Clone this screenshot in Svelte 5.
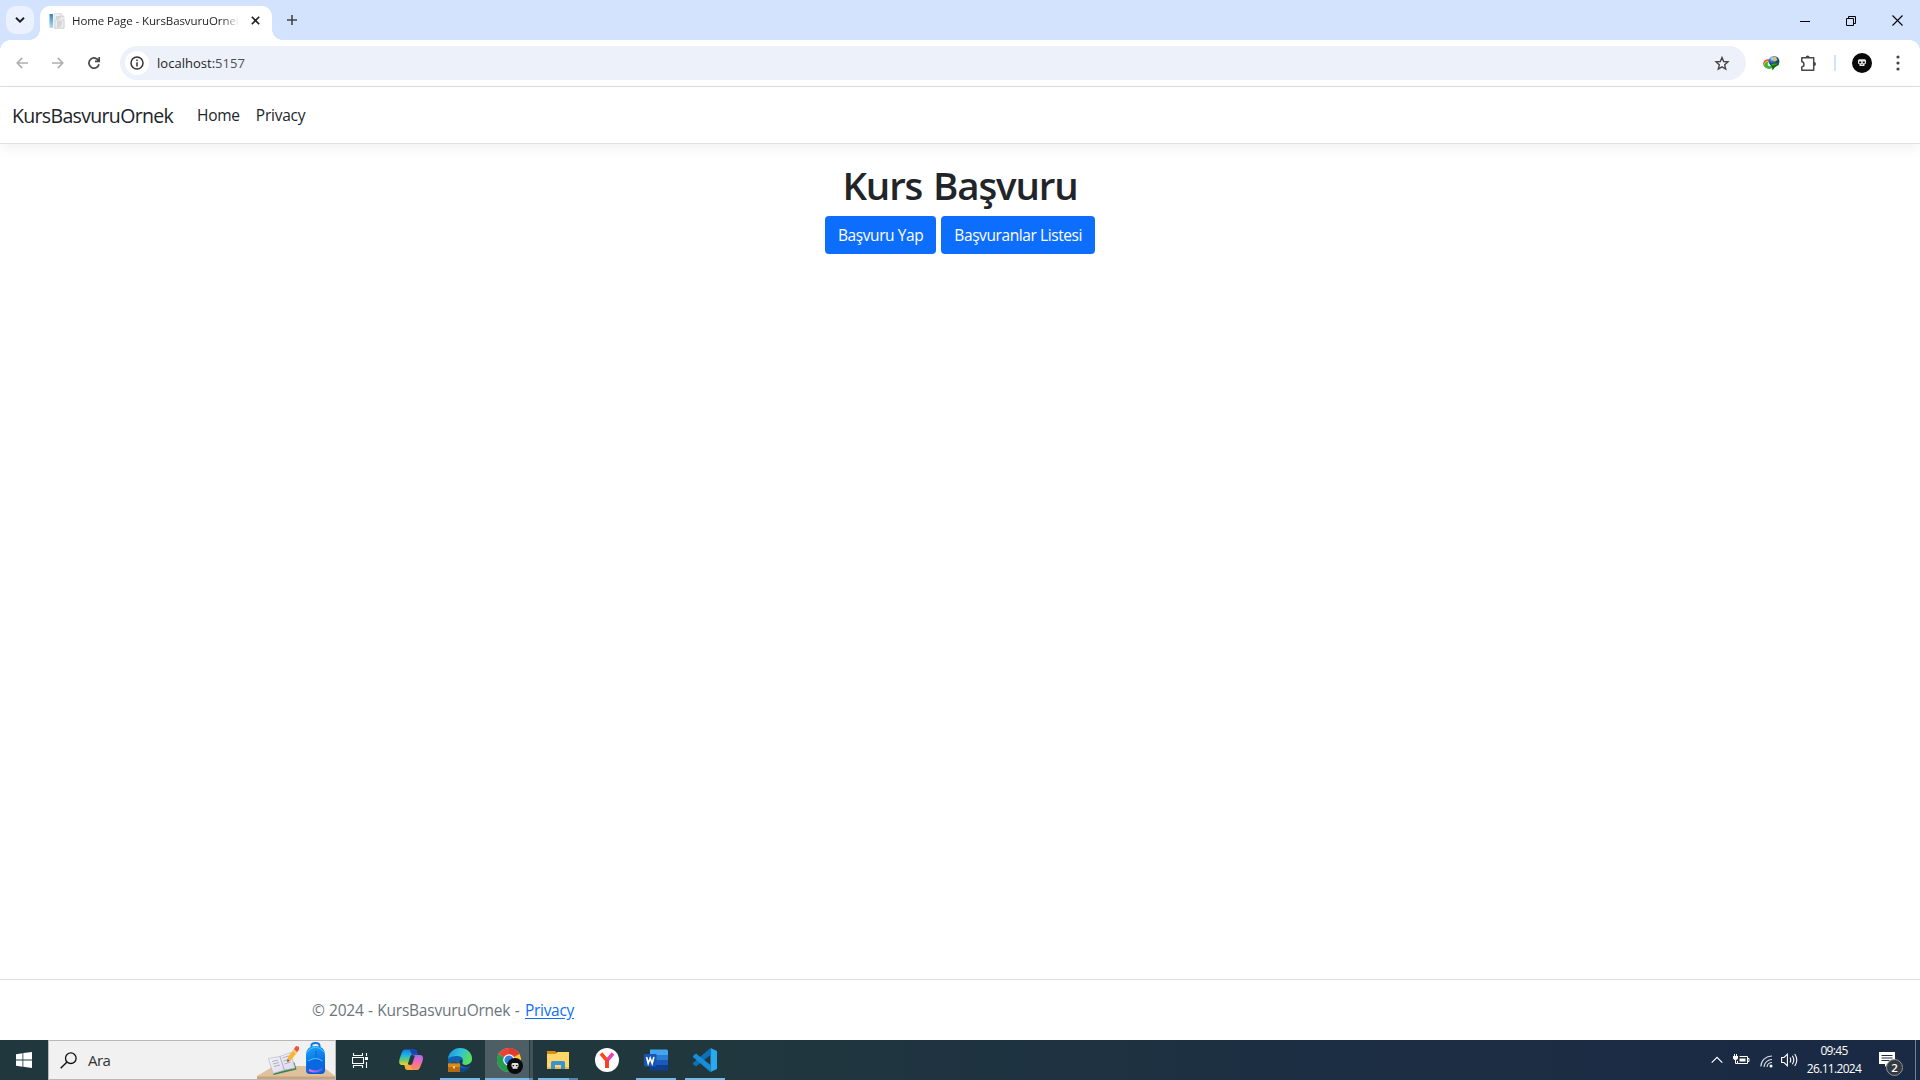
<script>
  const title = 'Home Page - KursBasvuruOrnek';
  const links = ['Home', 'Privacy'];
  const actions = ['Başvuru Yap', 'Başvuranlar Listesi'];
</script>

<div class="screen">
  <header class="tabstrip">
    <button class="tabsearch" aria-label="Search tabs">
      <svg width="10" height="6" viewBox="0 0 10 6"><path d="M1 .8 5 4.7 9 .8" fill="none" stroke="#1f1f1f" stroke-width="1.9" /></svg>
    </button>
    <div class="tab">
      <svg class="favicon" width="16" height="16" viewBox="0 0 16 16">
        <defs><linearGradient id="fv" x2="0" y2="1"><stop stop-color="#2f86c4" /><stop offset="1" stop-color="#b9dcf0" /></linearGradient></defs>
        <path d="M.5 1h3.500v14H.5z" fill="url(#fv)" /><path d="M5 .5h7l3 3v12H5z" fill="#eee" stroke="#d5d5d5" stroke-width=".6" />
        <path d="M7 4h5M7 6h3M8 9h5M8 11h5M8 13h4" stroke="#bdbdbd" /><path d="M12 .5v3h3M6 7h9v8H6z" fill="none" stroke="#d8d8d8" />
      </svg>
      <span class="tabtitle">{title}</span>
      <svg class="close" width="9" height="9" viewBox="0 0 9 9"><path d="m.8.8 7.400 7.400M8.200.8.8 8.200" stroke="#1f1f1f" stroke-width="1.600" /></svg>
    </div>
    <svg class="newtab" width="12" height="12" viewBox="0 0 12 12"><path d="M6 1v10M1 6h10" stroke="#444" stroke-width="1.600" /></svg>
    <div class="wincontrols">
      <svg width="10" height="10" viewBox="0 0 10 10"><path d="M0 5.500h10" stroke="#000" /></svg>
      <svg width="10" height="10" viewBox="0 0 10 10"><path d="M.5 2.500h7v7h-7zM2.500 2.500v-2h7v7h-2" fill="none" stroke="#000" /></svg>
      <svg width="11" height="11" viewBox="0 0 11 11"><path d="m.5.5 10 10M10.500.5l-10 10" stroke="#000" stroke-width="1.100" /></svg>
    </div>
  </header>

  <div class="toolbar">
    <svg class="nav-ic" width="12" height="12" viewBox="0 0 12 12"><path d="M12 6H1.500M6.300.9 1.200 6l5.100 5.100" fill="none" stroke="#adadad" stroke-width="1.500" /></svg>
    <svg class="nav-ic" width="12" height="12" viewBox="0 0 12 12"><path d="M0 6h10.500M5.700.9 10.800 6l-5.100 5.100" fill="none" stroke="#adadad" stroke-width="1.500" /></svg>
    <svg class="nav-ic" width="12" height="12" viewBox="0 0 12 12"><path d="M11 7.200A5.100 5.100 0 1 1 10.600 3.800M11.200 0v4.300H7" fill="none" stroke="#474747" stroke-width="1.700" /></svg>
    <div class="omnibox">
      <span class="site">
        <svg width="14" height="14" viewBox="0 0 14 14"><circle cx="7" cy="7" r="6" fill="none" stroke="#333" stroke-width="1.500" /><path d="M7 6.200V10.500M7 3.500V5" stroke="#333" stroke-width="1.500" /></svg>
      </span>
      <span class="url">localhost:<i>5157</i></span>
      <svg class="star" width="16" height="15" viewBox="0 0 16 15"><path d="m8 1.500 1.700 4 4.300.4-3.300 2.900 1 4.300L8 10.800l-3.700 2.300 1-4.300L2 5.900l4.300-.4z" fill="none" stroke="#474747" stroke-width="1.400" /></svg>
    </div>
    <svg class="idm" width="17" height="16" viewBox="0 0 17 16">
      <defs><radialGradient id="gl" cx=".35" cy=".25"><stop stop-color="#d9eaff" /><stop offset=".45" stop-color="#4d84d8" /><stop offset="1" stop-color="#193d83" /></radialGradient></defs>
      <ellipse cx="5.500" cy="8.800" rx="5.300" ry="4.500" fill="#e33a22" /><ellipse cx="5.800" cy="9.500" rx="4.900" ry="3.900" fill="#f8d62c" /><ellipse cx="6.200" cy="10.200" rx="5" ry="3.700" fill="#3eb63a" /><ellipse cx="6.600" cy="9" rx="2" ry="2.300" fill="#edf4fb" />
      <circle cx="11" cy="6.300" r="5.400" fill="url(#gl)" /><path d="M10.500 1.500 13 2l1.500 3-2.500 1.500-2-1z" fill="#d4c46b" /><path d="M7 9.500l4-1.500 5.300-.5-.6 2.500-3.500 2-2.700 3.500L9 12z" fill="#146b19" /><path d="M8 9.500l3-1 4 .2-5 2z" fill="#34a52e" />
    </svg>
    <svg class="puzzle" width="17" height="17" viewBox="0 0 17 17"><path d="M1.800 2.800h11.900v12.400H1.800v-3.300c2.900-.2 2.900-5 0-5.200z" fill="none" stroke="#474747" stroke-width="1.500" stroke-linejoin="round" /><path d="M5.600 2.500a2 2 0 0 1 4 0zM14 7a2 2 0 0 1 0 4z" fill="#474747" /></svg>
    <span class="split"></span>
    <svg class="avatar" width="20" height="20" viewBox="0 0 20 20"><circle cx="10" cy="10" r="10" fill="#090909" /><path d="M7 6.300h6l1 1v3.200l-1.500.8v1.800h-5v-1.800L6 10.500V7.300z" fill="#e8e8e8" /><path d="M7.200 8.500h2v1.700h-2zM10.800 8.500h2v1.700h-2zM9.500 11h1v1h-1z" fill="#090909" /></svg>
    <svg class="kebab" width="4" height="16" viewBox="0 0 4 16"><g fill="#474747"><circle cx="2" cy="2" r="1.600" /><circle cx="2" cy="8" r="1.600" /><circle cx="2" cy="14" r="1.600" /></g></svg>
  </div>

  <nav class="sitenav">
    <span class="brand">KursBasvuruOrnek</span>
    {#each links as link}<span class="link">{link}</span>{/each}
  </nav>

  <main>
    <h1>Kurs Başvuru</h1>
    <div class="actions">
      {#each actions as label}<button class="btn">{label}</button>{/each}
    </div>
  </main>

  <footer><span>© 2024 - KursBasvuruOrnek -</span><u>Privacy</u></footer>

  <div class="taskbar">
    <div class="start">
      <svg width="16" height="16" viewBox="0 0 16 16"><path d="M0 2.200 6.500 1.300v6.200H0zM7.300 1.100 16 0v7.500H7.300zM0 8.400h6.500v6.300L0 13.800zM7.300 8.400H16V16l-8.700-1.200z" fill="#fff" /></svg>
    </div>
    <div class="search">
      <svg class="lens" width="17" height="17" viewBox="0 0 17 17"><circle cx="10.800" cy="6.200" r="5.300" fill="none" stroke="#111" stroke-width="1.300" /><path d="m7 10-6.300 6.300" stroke="#111" stroke-width="1.400" /></svg>
      <span>Ara</span>
      <svg class="school" width="78" height="38" viewBox="0 0 78 38">
        <defs><linearGradient id="bp" y2="1" x2=".3"><stop stop-color="#19a7fb" /><stop offset="1" stop-color="#0757d7" /></linearGradient><linearGradient id="bk" x2="1" y2="1"><stop stop-color="#f7f7f7" /><stop offset="1" stop-color="#dcd3ef" /></linearGradient><linearGradient id="pk"><stop stop-color="#f26cd8" /><stop offset="1" stop-color="#5664ef" /></linearGradient></defs>
        <path d="M17 25h48l13 10v1H0v-1z" fill="#dfc19d" /><path d="M0 35.500h78V38H0z" fill="#c9a37a" />
        <path d="m12.500 18.500 4 15.500 23-5.500-2-7z" fill="#37854a" /><path d="m11.500 17.500 11.500-2 10.500-4 4.500 15.500-10 2-12 3.500z" fill="url(#bk)" stroke="#b9bac4" stroke-width=".7" /><path d="m23 15.500 4.500 14M15 20.500l6-1.500m-5 4 6-1.500m-5 4 6-1.500M25.500 17l6-2m-5 5 6-2m-5 5 6-2" stroke="#9ca1b1" stroke-width=".8" fill="none" />
        <path d="m30 21 1-5 6-8 3.500 3-6.500 8z" fill="#f9b632" /><path d="m30 21 .7-3 2 2z" fill="#695847" /><path d="m35.500 10 2-2.500 3.500 3-2 2.500z" fill="#f5cb82" /><path d="m37 8 2-3 3 .7v3L40 11z" fill="#ed5144" />
        <path d="M54.500 7V4.500q0-2.500 4-2.500t4 2.500V7" fill="none" stroke="#1277df" stroke-width="2" /><path d="M49 14q0-9 9.500-9T68 14v15q0 4-4 4H53q-4 0-4-4z" fill="url(#bp)" /><path d="M50 21q8-7 17 0v8q0 3-4 3H54q-4 0-4-3z" fill="#0968df" /><path d="M50.500 11Q53 6.500 58.500 6.500T66.500 11M51.500 20q7-5 14 0" fill="none" stroke="#57c5ff" /><path d="M52 29q7 3.500 13-1" fill="none" stroke="url(#pk)" stroke-width="2" /><path d="M58 10h2v6h-2z" fill="#0c73e9" />
      </svg>
    </div>
    <div class="taskview">
      <svg width="17" height="17" viewBox="0 0 17 17"><path d="M1.500 1v2.500h9V1M1.500 16v-2.500h9V16M.5 5.500h11v6H.5zM14.500 1v3M14.500 10v6" fill="none" stroke="#fff" stroke-width="1.100" /><path d="M13 5h3v3h-3z" fill="#fff" /></svg>
    </div>
    <div class="app">
      <svg width="24" height="24" viewBox="0 0 24 24">
        <defs><linearGradient id="c1" y2="1" x2="0"><stop stop-color="#1578e8" /><stop offset=".4" stop-color="#21b8df" /><stop offset=".7" stop-color="#6ccb69" /><stop offset="1" stop-color="#f4d52b" /></linearGradient><linearGradient id="c2" y2="1" x2="0"><stop stop-color="#a56bf4" /><stop offset=".5" stop-color="#f26aa9" /><stop offset="1" stop-color="#ff944c" /></linearGradient></defs>
        <path d="M6 1.500h9c3 0 3 3 3.500 5h-6L10 17H3C-.3 17-.2 13.500.7 10.500L3 4Q4 1.500 6 1.500z" fill="url(#c1)" /><path d="M10.500 1.500H15c3 0 3 3 3.800 5H13z" fill="#1d43b8" />
        <path d="M18 22H9c-3 0-3-3-3.500-5h6L14 7h7c3.500 0 3.300 3.500 2.400 6.500L21 19.500Q20 22 18 22z" fill="url(#c2)" /><path d="M13.500 22H9c-3 0-3-3-3.500-5H11z" fill="#f3ad35" /><path d="m11.500 7.500h4.500l-3 9H8.700z" fill="#20383f" />
      </svg>
    </div>
    <div class="app open">
      <svg width="24" height="24" viewBox="0 0 24 24">
        <defs><linearGradient id="e1" x2="1" y2=".4"><stop stop-color="#168bd7" /><stop offset=".5" stop-color="#31bfe0" /><stop offset="1" stop-color="#56e05c" /></linearGradient></defs>
        <circle cx="12" cy="12" r="12" fill="#0f62b2" /><path d="M0 11C1 4 6 0 12 0c7 0 12 5 12 10.500 0 4-3 6.500-6.500 6.500-3 0-4-1.500-3-3 1.500-2.500-.5-6-5-6C5 8 1 9 0 11z" fill="url(#e1)" /><path d="M8 14c0 4 4 7 9 6 2-.5 4-1.500 5.500-2.500C20 22 16 24 12 24z" fill="#0b488d" /><path d="M14.500 14c-1 1.500 0 3 3 3 2.500 0 5-1.300 6-3.500l.5 3-1.500 1.500c-5 2.500-11 .5-11-4 0-3 3.500-3 3 0z" fill="#20383f" />
        <path d="M0 15.500h12V24H0z" fill="#b56a12" /><path d="M0 15.500h12V19H0z" fill="#d98c1d" /><path d="M4 15.500V14h4v1.500" fill="none" stroke="#6f3d06" /><path d="M5 18h2v2.500H5z" fill="#f9d264" />
      </svg>
    </div>
    <div class="app active">
      <svg class="chrome" width="26" height="26" viewBox="0 0 26 26">
        <circle cx="12" cy="12" r="12" fill="#fcc934" /><path d="M12 12 1.600 6A12 12 0 0 1 22.400 6z" fill="#ea4335" /><path d="M12 12 1.600 6A12 12 0 0 0 12 24l5.200-9z" fill="#249b50" /><path d="M12 0a12 12 0 0 1 10.400 6H12z" fill="#dd3a31" /><circle cx="12" cy="12" r="5.800" fill="#fff" /><circle cx="12" cy="12" r="4.600" fill="#317ee8" />
        <circle cx="18" cy="18" r="8" fill="#0b0b0b" /><path d="M15.500 15h5l1 1v2.500l-1 .7v1.500h-5v-1.500l-1-.7V16z" fill="#e0e0e0" /><path d="M15.600 17h1.500v1.300h-1.500zM18.900 17h1.500v1.300h-1.500z" fill="#111" />
      </svg>
    </div>
    <div class="app open stacked">
      <svg width="24" height="24" viewBox="0 0 24 24"><path d="M1 3h8l2 2v4H1z" fill="#d98f0b" /><path d="M1 6h8.500l2-2H23v17H1z" fill="#ffd768" /><path d="M1 19h22v2H1z" fill="#efbd45" /><path d="M5 21v-6.500q0-1.500 1.500-1.500h11q1.500 0 1.500 1.500V21h-4v-4H9v4z" fill="#3793d6" /></svg>
    </div>
    <div class="app">
      <svg width="24" height="24" viewBox="0 0 24 24"><circle cx="12" cy="12" r="12" fill="#fff" /><path d="m6 5.500 6 7V20" fill="none" stroke="#fb4a19" stroke-width="3.600" stroke-linejoin="round" /><path d="m12 12.500 6-7" stroke="#e940b2" stroke-width="3.600" /><path d="M10.200 11.500h3.600V20h-3.600z" fill="#fa3f26" /></svg>
    </div>
    <div class="app open">
      <svg width="24" height="24" viewBox="0 0 24 24"><path d="M6 1.500h17l1 1V7H6z" fill="#44a5ee" /><path d="M6 7h18v5H6z" fill="#2b7cd3" /><path d="M6 12h18v5H6z" fill="#185abd" /><path d="M6 17h18v4.500l-1 1H6z" fill="#103f91" /><rect y="6" width="12.500" height="12.500" rx="1" fill="#1954b2" /><path d="m2.600 9 1.600 6.500L6.200 10l2 5.500L9.900 9" fill="none" stroke="#fff" stroke-width="1.600" /></svg>
    </div>
    <div class="app open">
      <svg width="24" height="24" viewBox="0 0 24 24"><path d="M17.500 0 24 3v18l-6.500 3V0z" fill="#28a8ef" /><path d="M17.500 0v7L3 18.500.3 16.200q-.6-.7 0-1.400z" fill="#0d71b8" /><path d="M17.500 24v-7L3 5.500.3 7.800q-.6.700 0 1.400z" fill="#168fd8" /></svg>
    </div>

    <div class="tray">
      <svg class="chev" width="12" height="8" viewBox="0 0 12 8"><path d="m.7 6.700 5.300-5.300 5.300 5.300" fill="none" stroke="#fff" stroke-width="1.200" /></svg>
      <svg class="bat" width="17" height="14" viewBox="0 0 17 14"><path d="M6.500 3.500h8v7h-10V8M14.500 5.500h1.500v3h-1.500" fill="none" stroke="#fff" /><path d="M6.500 5.500h6v3h-6zM0 3h5v2.500L3.500 7h-2L0 5.500z" fill="#fff" /><path d="M1.500 1v2M3.500 1v2M2.500 7v3.500h2" fill="none" stroke="#fff" /></svg>
      <svg class="wifi" width="14" height="13" viewBox="0 0 14 13"><path d="M.8 11.500A11 11 0 0 1 12 1M4 12a8 8 0 0 1 8-7.500M7 12a5 5 0 0 1 5-4.500" fill="none" stroke="#d8dde6" stroke-width="1.100" /><circle cx="11" cy="11" r="1.500" fill="#fff" /></svg>
      <svg class="vol" width="17" height="14" viewBox="0 0 17 14"><path d="M.6 4.500H3l3.400-3.300v11.600L3 9.500H.6zM9 4.500q1.500 2.500 0 5M11.300 2.700q3 4.300 0 8.600M13.700 1q4.200 6 0 12" fill="none" stroke="#fff" stroke-width="1.100" /></svg>
      <div class="clock"><span>09:45</span><span>26.11.2024</span></div>
      <div class="notes">
        <svg width="16" height="16" viewBox="0 0 16 16"><path d="M0 0h16v12H8.500L6 15v-3H0z" fill="#fff" /><path d="M2.500 3.500h11M2.500 6h11M2.500 8.500h8" stroke="#1b2b45" stroke-width="1.100" /></svg>
        <b>2</b>
      </div>
      <span class="peek"></span>
    </div>
  </div>
</div>

<style>
  :global(body) { margin: 0; background: #fff; }
  * { box-sizing: border-box; }
  svg { display: block; flex: none; }
  .screen { width: 1920px; height: 1080px; display: flex; flex-direction: column; overflow: hidden; background: #fff; font-family: "Open Sans", "Noto Sans", sans-serif; color: #212529; }
  button { border: 0; padding: 0; font: inherit; }

  .tabstrip { height: 40px; flex: none; display: flex; align-items: flex-start; background: #d3e3fd; padding: 6px 0 0 6px; }
  .tabsearch { width: 28px; height: 28px; border-radius: 10px; background: #ebf2fe; display: flex; align-items: center; justify-content: center; }
  .tab { position: relative; margin-left: 6px; width: 232px; height: 34px; background: #fff; border-radius: 10px 10px 0 0; display: flex; align-items: center; padding: 0 12px 5px 9px; }
  .tab::before, .tab::after { content: ""; position: absolute; bottom: 0; width: 10px; height: 10px; }
  .tab::before { left: -10px; background: radial-gradient(circle at 0 0, transparent 9.500px, #fff 10px); }
  .tab::after { right: -10px; background: radial-gradient(circle at 100% 0, transparent 9.500px, #fff 10px); }
  .tabtitle { margin-left: 7px; width: 167px; overflow: hidden; white-space: nowrap; font-size: 11.500px; letter-spacing: -.1px; color: #1f1f1f; mask-image: linear-gradient(90deg, #000 150px, transparent 167px); }
  .close { margin-left: auto; }
  .newtab { margin: 8px 0 0 14px; }
  .wincontrols { margin: 9px 17px 0 auto; display: flex; align-items: center; gap: 36px; }

  .toolbar { height: 47px; flex: none; display: flex; align-items: center; border-bottom: 1px solid #dedede; padding: 0 20px 0 16px; background: radial-gradient(circle at 10px 10px, #fff 9.500px, #d3e3fd 10px) 0 0 / 10px 10px no-repeat, radial-gradient(circle at 0 10px, #fff 9.500px, #d3e3fd 10px) 100% 0 / 10px 10px no-repeat, #fff; }
  .nav-ic { margin-right: 24px; }
  .omnibox { width: 1626px; height: 34px; margin-left: -4px; border-radius: 17px; background: #ecf1fa; display: flex; align-items: center; padding: 0 16px 0 5px; }
  .site { width: 24px; height: 24px; border-radius: 50%; background: #fff; display: flex; align-items: center; justify-content: center; }
  .url { margin-left: 8px; font-size: 13px; letter-spacing: .02px; color: #1f1f1f; }
  .url i { font-style: normal; color: #4c4f54; }
  .star { margin-left: auto; }
  .idm { margin-left: 17px; }
  .puzzle { margin-left: 20px; }
  .split { width: 2px; height: 16px; margin-left: 17px; background: #d3e3fd; }
  .avatar { margin-left: 16px; }
  .kebab { margin-left: auto; }

  .sitenav { height: 57px; flex: none; display: flex; align-items: center; border-bottom: 1px solid #dee2e6; padding: 0 12px; box-shadow: 0 4px 12px rgba(0, 0, 0, .06); }
  .brand { width: 185px; font-size: 19.500px; letter-spacing: -.67px; }
  .link { font-size: 15.500px; letter-spacing: -.25px; margin-right: 16px; }

  main { flex: 1; display: flex; flex-direction: column; align-items: center; padding-top: 18px; }
  h1 { margin: 0 0 6px; font-size: 38.500px; line-height: 47px; padding-bottom: 1px; font-weight: 560; letter-spacing: -1.150px; word-spacing: 2px; }
  .actions { display: flex; gap: 5px; }
  .btn { height: 38px; padding: 0 13px 1px; border-radius: 4px; background: #0d6efd; color: #fff; font-size: 15.500px; letter-spacing: -.41px; }

  footer { height: 61px; flex: none; border-top: 1px solid #dee2e6; padding: 0 312px; display: flex; align-items: center; gap: 5px; font-size: 15.500px; letter-spacing: -.22px; color: #6c757d; }
  footer span { word-spacing: .6px; width: 208px; white-space: nowrap; }
  u { letter-spacing: -.3px; color: #0d6efd; text-underline-offset: 2px; }

  .taskbar { height: 40px; flex: none; display: flex; color: #fff; background: linear-gradient(90deg, #20373e 0, #20373e 38%, #1c2e43 70%, #1a2944 100%); }
  .start { width: 48px; display: flex; align-items: center; justify-content: center; }
  .search { width: 288px; border: 1px solid #b8b8b8; background: #f1f1f1; display: flex; align-items: center; padding-left: 11px; color: #333; }
  .search span { margin-left: 11px; font-size: 15px; letter-spacing: -.5px; }
  .school { margin-left: auto; }
  .taskview { width: 48px; margin-right: 2.500px; display: flex; align-items: center; justify-content: center; }
  .app { width: 49px; display: flex; align-items: center; justify-content: center; }
  .open { background: linear-gradient(#76b9ed, #76b9ed) 50% 100% / 40px 2px no-repeat; }
  .stacked { background: linear-gradient(90deg, #76b9ed 0 31px, #5686b0 31px) 50% 100% / 40px 2px no-repeat; }
  .active { background: linear-gradient(90deg, #76b9ed 44px, #5c8fb8 44px) 50% 100% / 48px 2px no-repeat, linear-gradient(90deg, #4d5f65 0 44px, #24383f 44px 45px, #435257 45px) 50% 0 / 48px 100% no-repeat; }
  .chrome { margin: 2px 0 0 2px; }

  .tray { margin-left: auto; display: flex; align-items: center; }
  .bat { margin-left: 10px; }
  .wifi { margin: 3px 0 0 10px; }
  .vol { margin-left: 7px; }
  .clock { width: 56px; margin-left: 8px; display: flex; flex-direction: column; align-items: center; font-size: 12px; line-height: 18px; letter-spacing: -.68px; white-space: nowrap; }
  .notes { position: relative; margin: 0 20px 0 17px; }
  .notes b { position: absolute; left: 7px; top: 7px; width: 17px; height: 17px; border-radius: 50%; background: #343941; border: 1px solid #8f959e; font-size: 11.500px; line-height: 15px; text-align: center; font-weight: 600; }
  .peek { width: 1px; height: 40px; margin-right: 4px; background: #77808f; }
</style>
